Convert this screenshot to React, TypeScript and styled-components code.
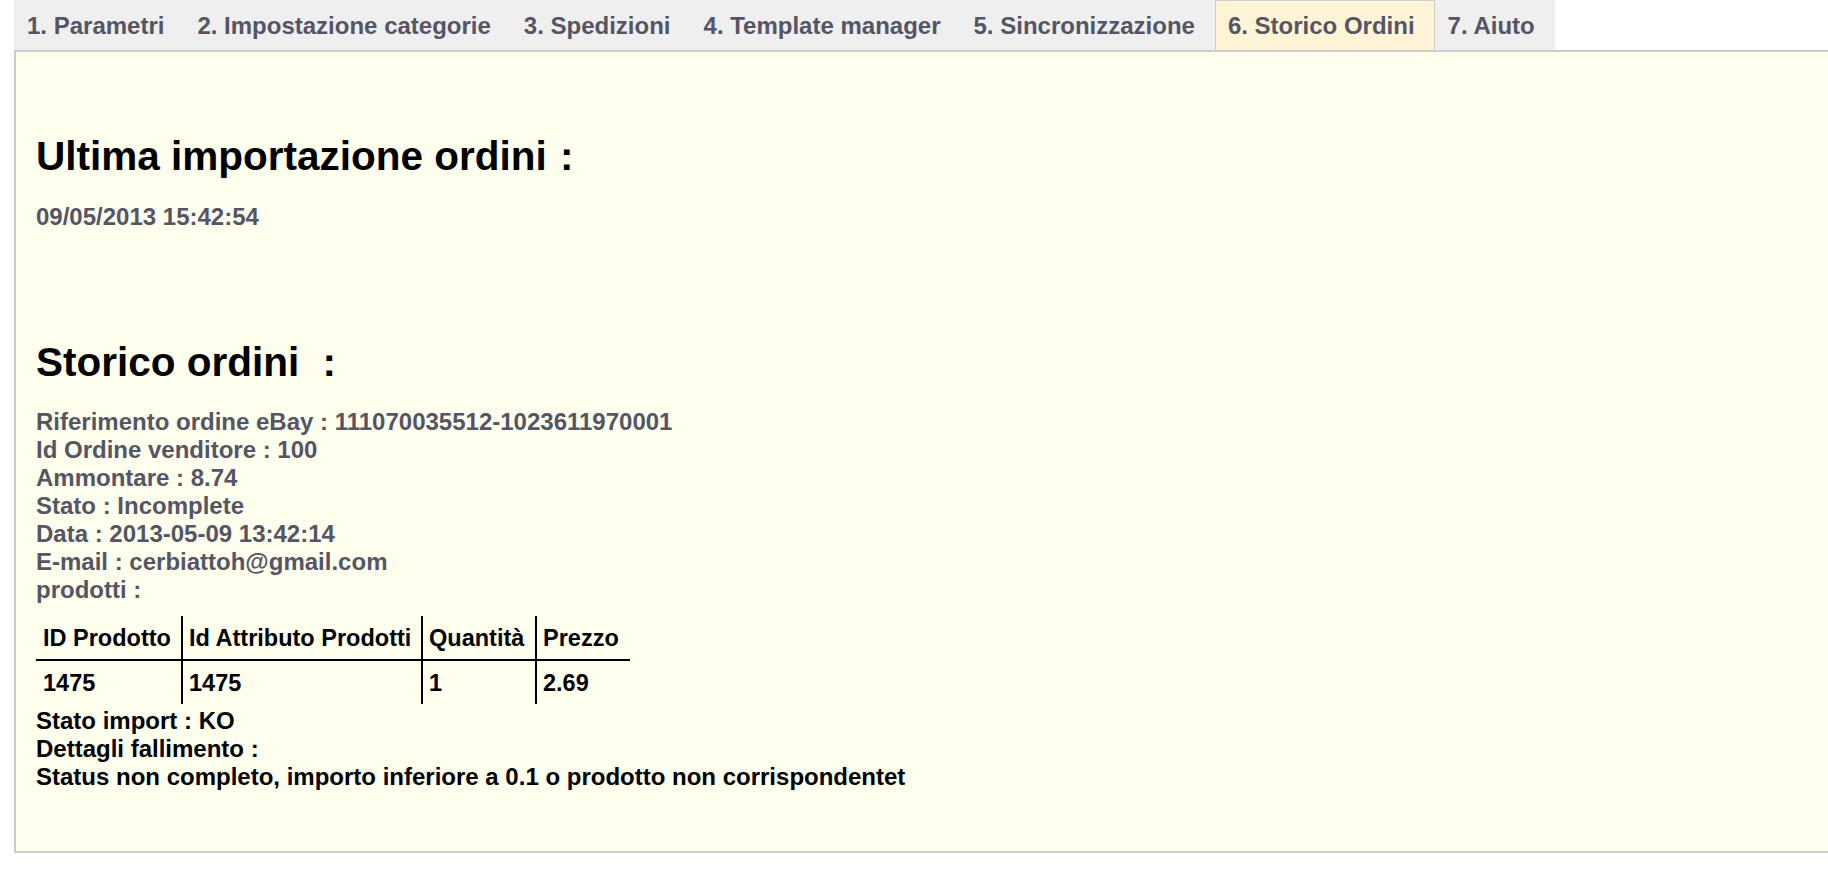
import React from "react";
import styled, { createGlobalStyle } from "styled-components";

const GlobalStyle = createGlobalStyle`
  html, body {
    margin: 0;
    padding: 0;
    background: #ffffff;
  }
  body {
    font-family: "Liberation Sans", Arial, Helvetica, sans-serif;
    font-weight: bold;
  }
`;

const Page = styled.div`
  padding-left: 14px;
`;

const TabBar = styled.ul`
  display: inline-flex;
  list-style: none;
  margin: 0;
  padding: 0;
  height: 50px;
  background: #efefef;
`;

const Tab = styled.li<{ $active?: boolean }>`
  display: flex;
  align-items: center;
  box-sizing: border-box;
  height: 50px;
  padding: 0 19px 0 12px;
  border: 1px solid ${(p) => (p.$active ? "#cccccc" : "transparent")};
  border-bottom: none;
  background: ${(p) => (p.$active ? "#fff5d6" : "transparent")};
  color: #555565;
  font-size: 24px;
  white-space: nowrap;
`;

const Panel = styled.section`
  border: 2px solid #cccccc;
  border-right: none;
  background: #ffffee;
  padding: 80px 0 60px 20px;
`;

const Heading = styled.h2<{ $gap?: number }>`
  margin: ${(p) => p.$gap ?? 0}px 0 0;
  font-size: 40.5px;
  line-height: 48px;
  color: #000000;
`;

const Colon = styled.span<{ $gap: number }>`
  margin-left: ${(p) => p.$gap}px;
`;

const Line = styled.div<{ $dark?: boolean }>`
  font-size: 24px;
  line-height: 28px;
  color: ${(p) => (p.$dark ? "#000000" : "#555565")};
  white-space: nowrap;
`;

const Block = styled.div<{ $gap: number }>`
  margin-top: ${(p) => p.$gap}px;
`;

const Table = styled.table`
  margin: 12px 0 3px;
  border-collapse: separate;
  border-spacing: 0;
  color: #000000;
  font-size: 23.5px;
  line-height: 28px;
`;

const Th = styled.th<{ $w: number; $first?: boolean }>`
  box-sizing: border-box;
  width: ${(p) => p.$w}px;
  height: 45px;
  padding: 0 0 0 ${(p) => (p.$first ? 7 : 6)}px;
  text-align: left;
  vertical-align: middle;
  white-space: nowrap;
  border-left: ${(p) => (p.$first ? "none" : "2px solid #000")};
  border-bottom: 2px solid #000;
`;

const Td = styled.td<{ $first?: boolean }>`
  box-sizing: border-box;
  height: 43px;
  padding: 0 0 0 ${(p) => (p.$first ? 7 : 6)}px;
  vertical-align: middle;
  border-left: ${(p) => (p.$first ? "none" : "2px solid #000")};
`;

const tabs = [
  "1. Parametri",
  "2. Impostazione categorie",
  "3. Spedizioni",
  "4. Template manager",
  "5. Sincronizzazione",
  "6. Storico Ordini",
  "7. Aiuto",
];

const orderInfo = [
  "Riferimento ordine eBay : 111070035512-1023611970001",
  "Id Ordine venditore : 100",
  "Ammontare : 8.74",
  "Stato : Incomplete",
  "Data : 2013-05-09 13:42:14",
  "E-mail : cerbiattoh@gmail.com",
  "prodotti :",
];

const columns = [
  { label: "ID Prodotto", w: 145 },
  { label: "Id Attributo Prodotti", w: 240 },
  { label: "Quantità", w: 114 },
  { label: "Prezzo", w: 95 },
];

const row = ["1475", "1475", "1", "2.69"];

export default function App() {
  return (
    <Page>
      <GlobalStyle />
      <TabBar>
        {tabs.map((t) => (
          <Tab key={t} $active={t.startsWith("6.")}>
            {t}
          </Tab>
        ))}
      </TabBar>
      <Panel>
        <Heading>
          Ultima importazione ordini<Colon $gap={2}> :</Colon>
        </Heading>
        <Block $gap={23}>
          <Line>09/05/2013 15:42:54</Line>
        </Block>
        <Heading $gap={107}>
          Storico ordini<Colon $gap={12}> :</Colon>
        </Heading>
        <Block $gap={22}>
          {orderInfo.map((l) => (
            <Line key={l}>{l}</Line>
          ))}
        </Block>
        <Table>
          <thead>
            <tr>
              {columns.map((c, i) => (
                <Th key={c.label} $w={c.w} $first={i === 0}>
                  {c.label}
                </Th>
              ))}
            </tr>
          </thead>
          <tbody>
            <tr>
              {row.map((v, i) => (
                <Td key={i} $first={i === 0}>
                  {v}
                </Td>
              ))}
            </tr>
          </tbody>
        </Table>
        <Line $dark>Stato import : KO</Line>
        <Line $dark>Dettagli fallimento :</Line>
        <Line $dark>Status non completo, importo inferiore a 0.1 o prodotto non corrispondentet</Line>
      </Panel>
    </Page>
  );
}
